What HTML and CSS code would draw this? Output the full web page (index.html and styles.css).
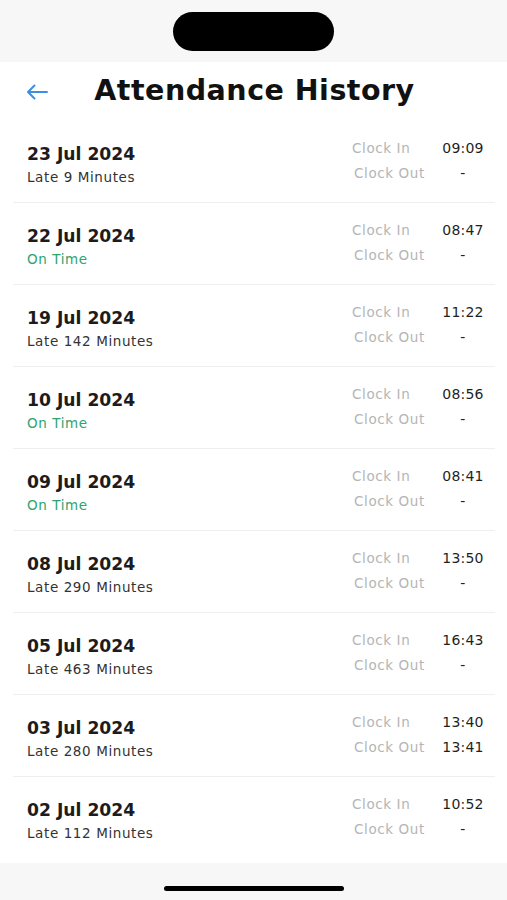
FILE: index.html
```html
<!DOCTYPE html>
<html>
<head>
<meta charset="utf-8">
<link rel="stylesheet" href="styles.css">
</head>
<body>
<div class="screen">
  <div class="status"><div class="island"></div></div>
  <div class="header">
    <svg class="back" width="22" height="16" viewBox="0 0 22 16"><path d="M21 8H2M8.5 1.5L2 8l6.5 6.5" fill="none" stroke="#3a8ee6" stroke-width="2" stroke-linecap="round" stroke-linejoin="round"/></svg>
    <h1 class="title">Attendance History</h1>
  </div>
  <div class="list">
    <div class="row"><div class="left"><div class="date">23 Jul 2024</div><div class="sub">Late 9 Minutes</div></div><div class="right"><div class="line"><span class="lbl">Clock In</span><span class="val">09:09</span></div><div class="line"><span class="lbl">Clock Out</span><span class="val">-</span></div></div></div>
    <div class="row"><div class="left"><div class="date">22 Jul 2024</div><div class="sub ok">On Time</div></div><div class="right"><div class="line"><span class="lbl">Clock In</span><span class="val">08:47</span></div><div class="line"><span class="lbl">Clock Out</span><span class="val">-</span></div></div></div>
    <div class="row"><div class="left"><div class="date">19 Jul 2024</div><div class="sub">Late 142 Minutes</div></div><div class="right"><div class="line"><span class="lbl">Clock In</span><span class="val">11:22</span></div><div class="line"><span class="lbl">Clock Out</span><span class="val">-</span></div></div></div>
    <div class="row"><div class="left"><div class="date">10 Jul 2024</div><div class="sub ok">On Time</div></div><div class="right"><div class="line"><span class="lbl">Clock In</span><span class="val">08:56</span></div><div class="line"><span class="lbl">Clock Out</span><span class="val">-</span></div></div></div>
    <div class="row"><div class="left"><div class="date">09 Jul 2024</div><div class="sub ok">On Time</div></div><div class="right"><div class="line"><span class="lbl">Clock In</span><span class="val">08:41</span></div><div class="line"><span class="lbl">Clock Out</span><span class="val">-</span></div></div></div>
    <div class="row"><div class="left"><div class="date">08 Jul 2024</div><div class="sub">Late 290 Minutes</div></div><div class="right"><div class="line"><span class="lbl">Clock In</span><span class="val">13:50</span></div><div class="line"><span class="lbl">Clock Out</span><span class="val">-</span></div></div></div>
    <div class="row"><div class="left"><div class="date">05 Jul 2024</div><div class="sub">Late 463 Minutes</div></div><div class="right"><div class="line"><span class="lbl">Clock In</span><span class="val">16:43</span></div><div class="line"><span class="lbl">Clock Out</span><span class="val">-</span></div></div></div>
    <div class="row"><div class="left"><div class="date">03 Jul 2024</div><div class="sub">Late 280 Minutes</div></div><div class="right"><div class="line"><span class="lbl">Clock In</span><span class="val">13:40</span></div><div class="line"><span class="lbl">Clock Out</span><span class="val">13:41</span></div></div></div>
    <div class="row"><div class="left"><div class="date">02 Jul 2024</div><div class="sub">Late 112 Minutes</div></div><div class="right"><div class="line"><span class="lbl">Clock In</span><span class="val">10:52</span></div><div class="line"><span class="lbl">Clock Out</span><span class="val">-</span></div></div></div>
  </div>
  <div class="homebar"><div class="indicator"></div></div>
</div>
</body>
</html>
```
FILE: styles.css
```css
* { box-sizing: border-box; }
html, body { margin: 0; padding: 0; background: #fff; }
body { font-family: "DejaVu Sans", "Liberation Sans", sans-serif; }
.screen { width: 507px; height: 900px; display: flex; flex-direction: column; background: #fff; }
.status { height: 62px; background: #f7f7f7; display: flex; justify-content: center; padding-top: 12px; }
.island { width: 161px; height: 39px; border-radius: 20px; background: #000; }
.header { height: 59px; display: flex; align-items: center; justify-content: center; position: relative; }
.back { position: absolute; left: 26px; top: 22px; }
.title { margin: 0 0 2px 2px; font-size: 28.5px; font-weight: 700; color: #111; letter-spacing: 0.5px; }
.list { padding: 0 12px 0 13px; }
.row { height: 82px; border-bottom: 1px solid #efefef; display: flex; justify-content: space-between; }
.row:last-child { border-bottom: none; }
.left { padding: 22px 0 0 14px; }
.date { font-size: 17.2px; line-height: 22px; font-weight: 700; color: #1c1c1c; }
.sub { margin-top: 3px; font-size: 13.5px; line-height: 18px; color: #333; letter-spacing: 0.6px; }
.sub.ok { color: #2ea46e; }
.right { padding-top: 14px; width: 143px; padding-right: 10px; }
.line { display: flex; height: 25px; align-items: center; }
.lbl { width: 89px; font-size: 13.5px; color: #b5b5b5; letter-spacing: 0.6px; }
.line:nth-child(2) .lbl { padding-left: 2px; }
.val { width: 44px; text-align: center; font-size: 14px; color: #1f1f1f; letter-spacing: 0.2px; }
.homebar { flex: 1; background: #f7f7f7; display: flex; justify-content: center; align-items: flex-end; padding-bottom: 9px; margin-top: 4px; }
.indicator { width: 180px; height: 5px; border-radius: 3px; background: #000; }
```
